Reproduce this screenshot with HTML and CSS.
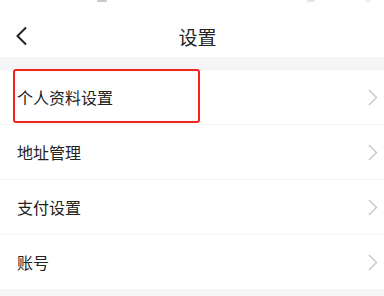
FILE: index.html
```html
<html>
<head>
  <meta charset="UTF-8" />
  <meta name="viewport" content="width=device-width, initial-scale=1.0"/>
  <title>设置</title>
  <link rel="stylesheet" href="styles.css">
</head>
<body>
  <div class="status">
    <span class="dot dot-a"></span>
    <span class="dot dot-b"></span>
    <span class="dot dot-c"></span>
  </div>

  <div class="header">
    <span class="back">
      <svg width="14" height="20" viewBox="0 0 14 20">
        <path d="M11 1.5 L2.5 10 L11 18.5" fill="none" stroke="#222" stroke-width="2"/>
      </svg>
    </span>
    <h1>设置</h1>
    <span class="back"></span>
  </div>

  <div class="gap"></div>

  <div class="list">
    <div class="item">
      <span class="item-label highlight">个人资料设置</span>
      <svg class="arrow" width="10" height="17" viewBox="0 0 10 17"><path d="M1 1 L8.5 8.5 L1 16" fill="none" stroke="#c2c2c2" stroke-width="1.3"/></svg>
    </div>
    <div class="item">
      <span class="item-label">地址管理</span>
      <svg class="arrow" width="10" height="17" viewBox="0 0 10 17"><path d="M1 1 L8.5 8.5 L1 16" fill="none" stroke="#c2c2c2" stroke-width="1.3"/></svg>
    </div>
    <div class="item">
      <span class="item-label">支付设置</span>
      <svg class="arrow" width="10" height="17" viewBox="0 0 10 17"><path d="M1 1 L8.5 8.5 L1 16" fill="none" stroke="#c2c2c2" stroke-width="1.3"/></svg>
    </div>
    <div class="item">
      <span class="item-label">账号</span>
      <svg class="arrow" width="10" height="17" viewBox="0 0 10 17"><path d="M1 1 L8.5 8.5 L1 16" fill="none" stroke="#c2c2c2" stroke-width="1.3"/></svg>
    </div>
  </div>
</body>
</html>
```

FILE: styles.css
```css
body {
  margin: 0;
  background-color: #f5f5f7;
  font-family: "Noto Sans CJK SC", "Noto Sans", sans-serif;
  color: #222;
}

.status {
  height: 3px;
  background: #fff;
  display: flex;
  align-items: flex-start;
}

.dot {
  height: 2px;
  background: #c9c6d2;
  border-radius: 1px;
}

.dot-a {
  width: 10px;
  margin-left: 97px;
}

.dot-b {
  width: 8px;
  margin-left: 200px;
  background: #e4e4e8;
}

.dot-c {
  width: 6px;
  margin-left: 50px;
  background: #eeeef0;
}

.header {
  height: 42px;
  padding: 12px 14px 0 15px;
  background: #fff;
  display: flex;
  align-items: center;
  justify-content: space-between;
}

.back {
  width: 14px;
  height: 20px;
  display: flex;
}

.header h1 {
  margin: 0 0 0 10px;
  font-size: 19px;
  font-weight: normal;
}

.gap {
  height: 13px;
}

.list {
  display: flex;
  flex-direction: column;
  gap: 1px;
}

.item {
  height: 54px;
  background: #fff;
  display: flex;
  align-items: center;
  justify-content: space-between;
  padding: 0 6px 0 17px;
  position: relative;
}

.item-label {
  font-size: 16px;
}

.highlight::after {
  content: "";
  position: absolute;
  left: 13px;
  top: -1px;
  width: 183px;
  height: 50px;
  border: 2px solid #f5231b;
  border-radius: 3px;
}
```
